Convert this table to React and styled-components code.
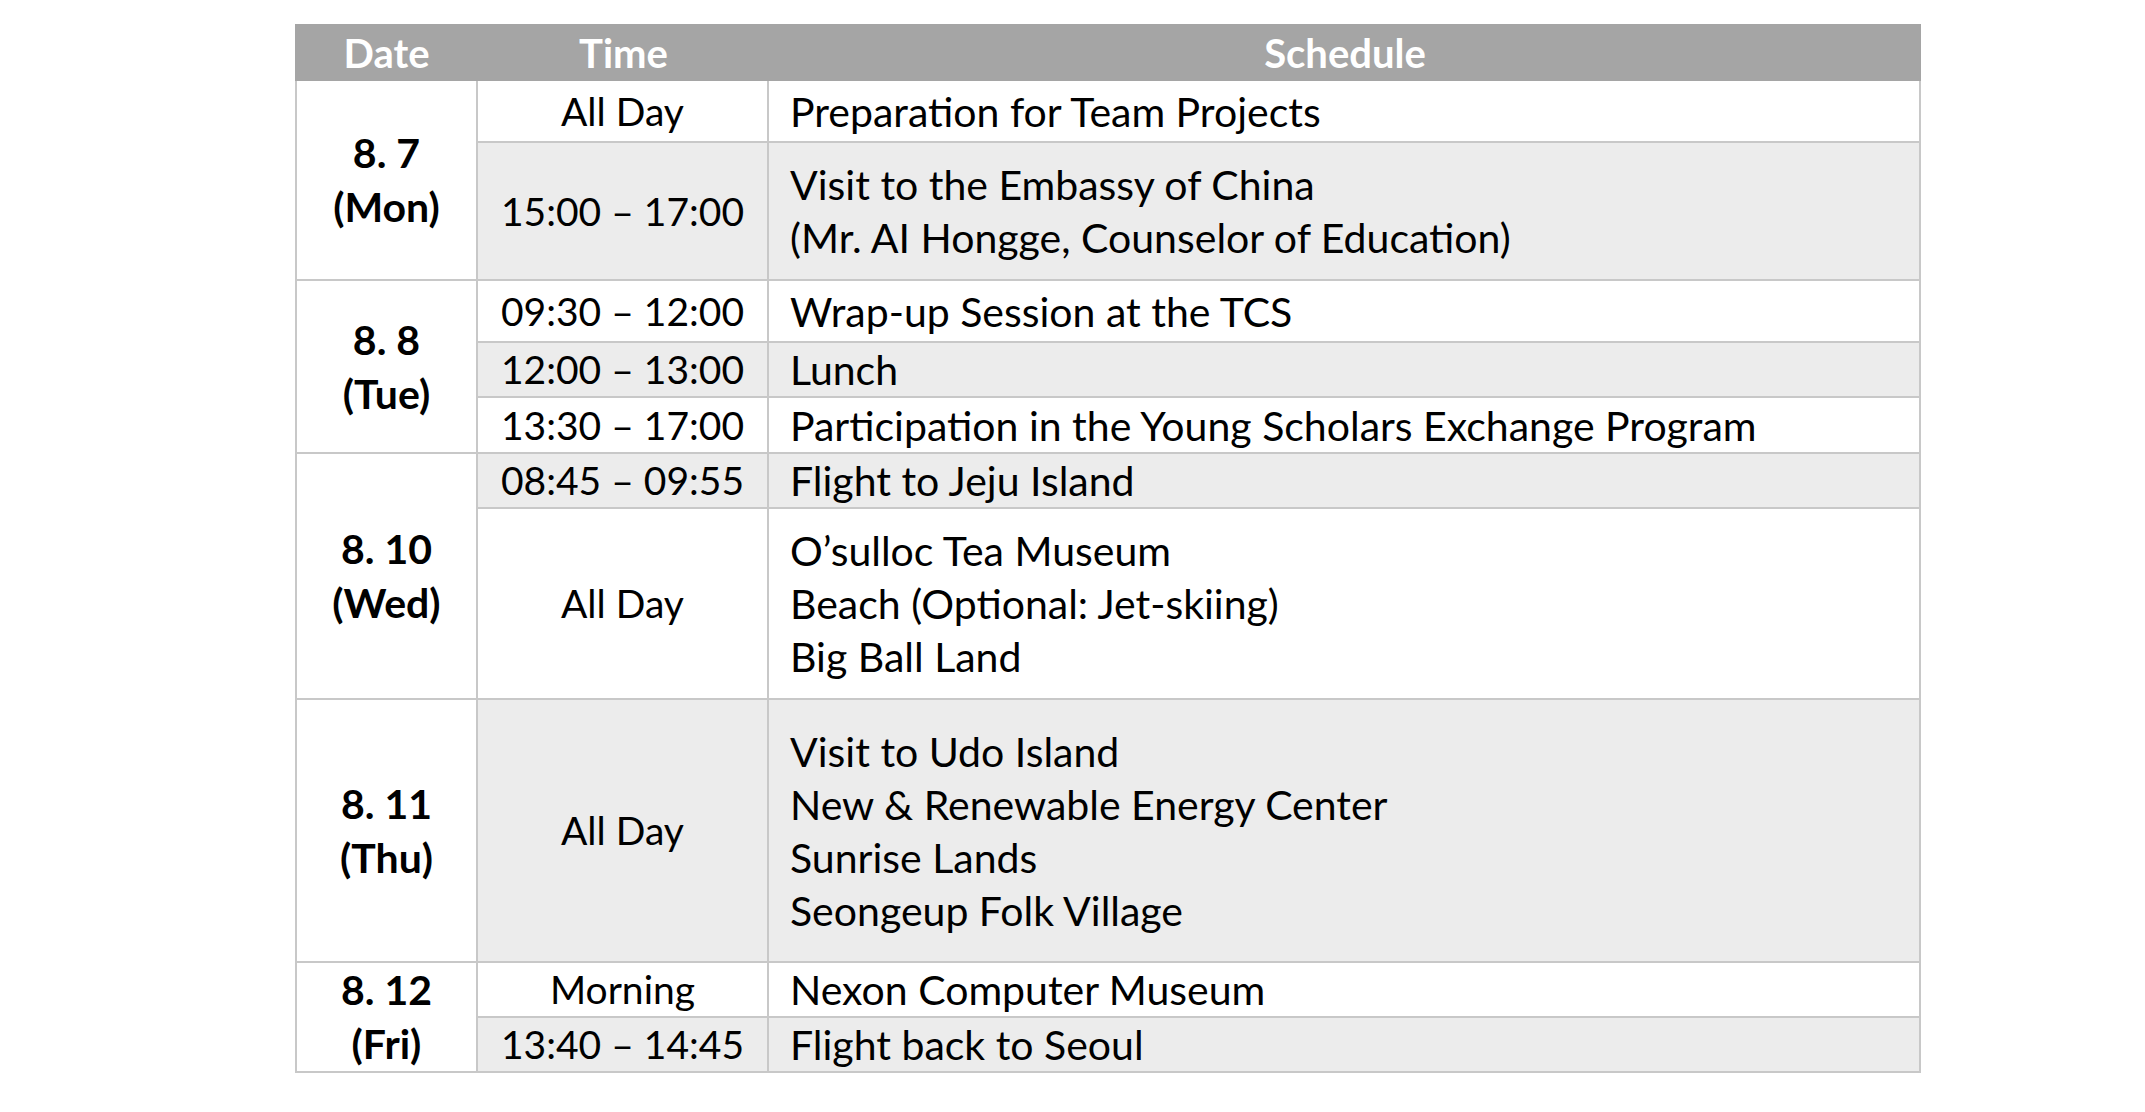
import React from "react";
import styled, { createGlobalStyle } from "styled-components";

const GlobalStyle = createGlobalStyle`
  html, body {
    margin: 0;
    padding: 0;
    background: #ffffff;
  }
  body {
    font-family: Lato, "Open Sans", sans-serif;
    color: #000;
  }
`;

const Page = styled.div`
  padding: 24px 0 0 295px;
`;

const Grid = styled.div`
  display: grid;
  width: 1626px;
  grid-template-columns: 183px 291px 1152px;
  grid-template-rows: ${(p) => p.$rows};
  font-family: Lato, "Open Sans", sans-serif;
  font-size: 40px;
  line-height: 53px;
`;

const HeaderCell = styled.div`
  background: #a5a5a5;
  color: #ffffff;
  font-weight: 700;
  display: flex;
  align-items: center;
  justify-content: center;
  padding-top: 1px;
`;

const Cell = styled.div`
  box-sizing: border-box;
  border-right: 2px solid #c8c8c8;
  border-bottom: 2px solid #c8c8c8;
  display: flex;
  flex-direction: column;
  justify-content: center;
`;

const DateCell = styled(Cell)`
  grid-column: 1;
  grid-row: span ${(p) => p.$span};
  border-left: 2px solid #c8c8c8;
  background: #ffffff;
  align-items: center;
  font-weight: 700;
  font-size: 41px;
  line-height: 54px;
  text-align: center;
`;

const TimeCell = styled(Cell)`
  grid-column: 2;
  background: ${(p) => (p.$shaded ? "#ececec" : "#ffffff")};
  align-items: center;
  text-align: center;
  white-space: nowrap;
  font-size: 39px;
`;

const ScheduleCell = styled(Cell)`
  grid-column: 3;
  background: ${(p) => (p.$shaded ? "#ececec" : "#ffffff")};
  align-items: flex-start;
  padding-left: 21px;
  white-space: nowrap;
  font-size: 41px;
`;

const Line = styled.span`
  display: block;
`;

const days = [
  {
    date: "8. 7",
    day: "(Mon)",
    rows: [
      { time: "All Day", lines: ["Preparation for Team Projects"], h: 62 },
      {
        time: "15:00 – 17:00",
        lines: [
          "Visit to the Embassy of China",
          "(Mr. AI Hongge, Counselor of Education)",
        ],
        h: 138,
      },
    ],
  },
  {
    date: "8. 8",
    day: "(Tue)",
    rows: [
      { time: "09:30 – 12:00", lines: ["Wrap-up Session at the TCS"], h: 62 },
      { time: "12:00 – 13:00", lines: ["Lunch"], h: 55 },
      {
        time: "13:30 – 17:00",
        lines: ["Participation in the Young Scholars Exchange Program"],
        h: 56,
      },
    ],
  },
  {
    date: "8. 10",
    day: "(Wed)",
    rows: [
      { time: "08:45 – 09:55", lines: ["Flight to Jeju Island"], h: 55 },
      {
        time: "All Day",
        lines: [
          "O’sulloc Tea Museum",
          "Beach (Optional: Jet-skiing)",
          "Big Ball Land",
        ],
        h: 191,
      },
    ],
  },
  {
    date: "8. 11",
    day: "(Thu)",
    rows: [
      {
        time: "All Day",
        lines: [
          "Visit to Udo Island",
          "New & Renewable Energy Center",
          "Sunrise Lands",
          "Seongeup Folk Village",
        ],
        h: 263,
      },
    ],
  },
  {
    date: "8. 12",
    day: "(Fri)",
    rows: [
      { time: "Morning", lines: ["Nexon Computer Museum"], h: 55 },
      { time: "13:40 – 14:45", lines: ["Flight back to Seoul"], h: 55 },
    ],
  },
];

export default function App() {
  const heights = days.flatMap((d) => d.rows.map((r) => r.h));
  const rowTemplate = ["57px", ...heights.map((h) => `${h}px`)].join(" ");
  let idx = 0;

  return (
    <>
      <GlobalStyle />
      <Page>
        <Grid $rows={rowTemplate}>
          <HeaderCell>Date</HeaderCell>
          <HeaderCell>Time</HeaderCell>
          <HeaderCell>Schedule</HeaderCell>
          {days.map((d) => (
            <React.Fragment key={d.date}>
              <DateCell $span={d.rows.length}>
                <Line>{d.date}</Line>
                <Line>{d.day}</Line>
              </DateCell>
              {d.rows.map((r, i) => {
                const shaded = idx % 2 === 1;
                idx += 1;
                return (
                  <React.Fragment key={i}>
                    <TimeCell $shaded={shaded}>{r.time}</TimeCell>
                    <ScheduleCell $shaded={shaded}>
                      {r.lines.map((l) => (
                        <Line key={l}>{l}</Line>
                      ))}
                    </ScheduleCell>
                  </React.Fragment>
                );
              })}
            </React.Fragment>
          ))}
        </Grid>
      </Page>
    </>
  );
}
